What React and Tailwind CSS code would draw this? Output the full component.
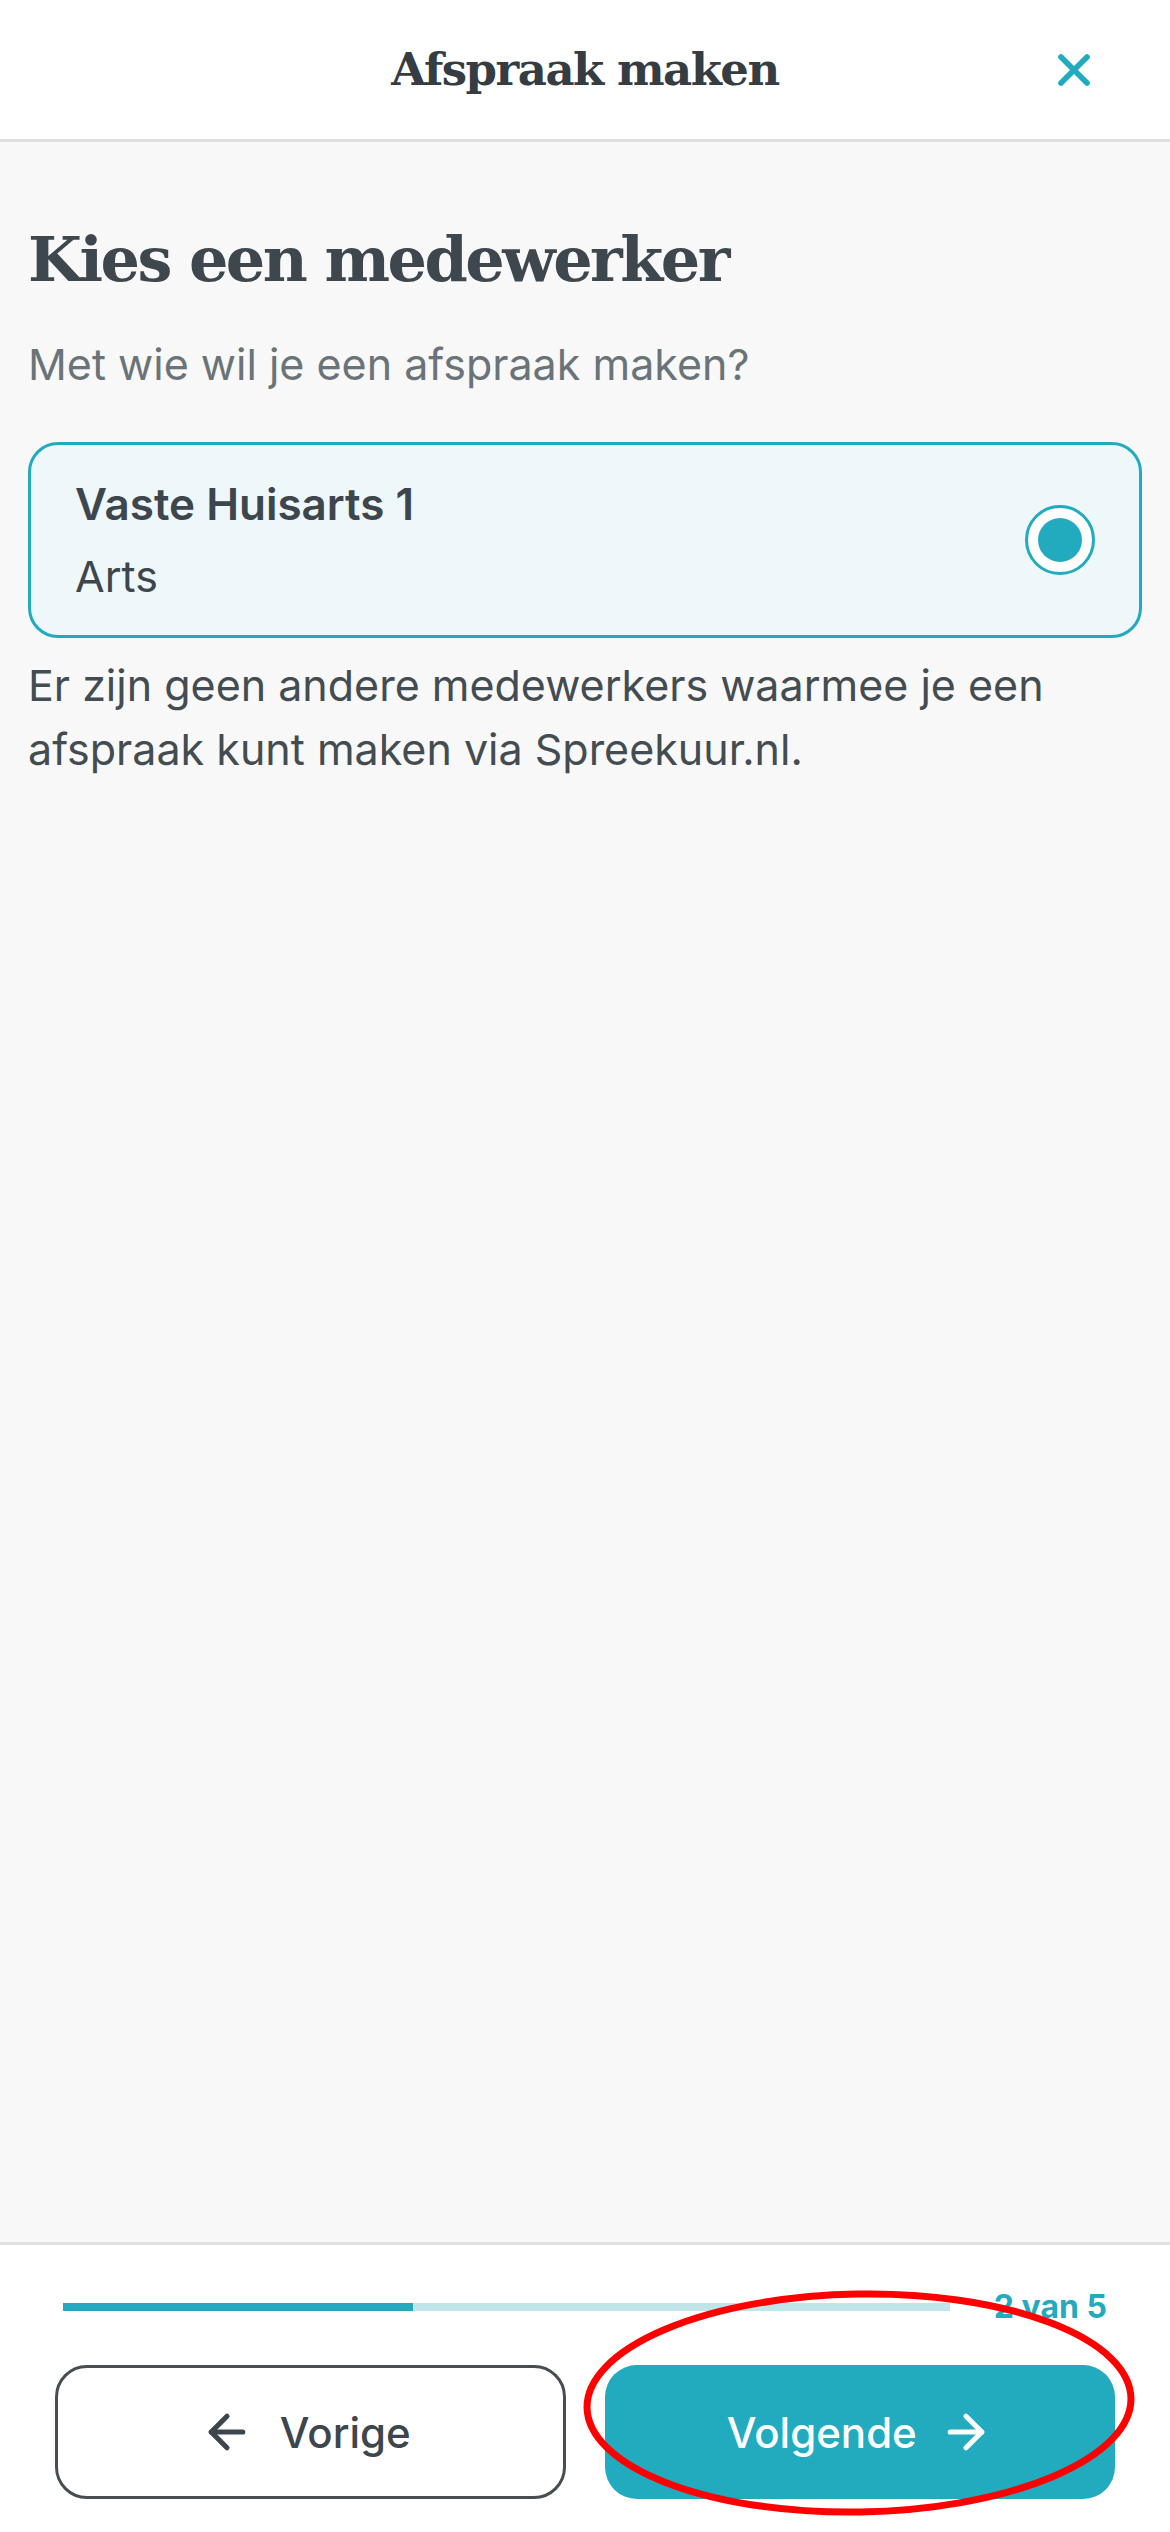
import React from 'react';
import {ArrowLeft, ArrowRight, X} from 'lucide-react';

const serif = {fontFamily: '"DejaVu Serif", "Liberation Serif", serif'};

function Header() {
  return (
    <div className="h-[142px] shrink-0 bg-white border-b-[3px] border-[#dedede] flex items-center justify-center relative">
      <h1 className="text-[45px] font-bold text-[#353d42] tracking-[-1.5px]" style={serif}>Afspraak maken</h1>
      <button className="absolute right-[70px] top-[44px] text-[#22abbf]">
        <X size={52} strokeWidth={2.6}/>
      </button>
    </div>
  );
}

function EmployeeCard() {
  return (
    <div className="mt-[48px] h-[196px] rounded-[30px] border-[3px] border-[#22abbf] bg-[#eef7fa] flex items-center pl-[44px] pr-[44px]">
      <div className="flex-1 flex flex-col">
        <p className="text-[44px] font-semibold text-[#3d464c] leading-[60px]">Vaste Huisarts 1</p>
        <p className="text-[43px] text-[#3d464c] leading-[60px] mt-[12px]">Arts</p>
      </div>
      <div className="w-[70px] h-[70px] rounded-full border-[3px] border-[#22abbf] bg-white flex items-center justify-center">
        <div className="w-[44px] h-[44px] rounded-full bg-[#22abbf]"/>
      </div>
    </div>
  );
}

function Footer() {
  return (
    <div className="h-[290px] shrink-0 bg-white border-t-[3px] border-[#e0e0e0] relative">
      <div className="flex items-center px-[63px] pt-[46px] gap-[44px]">
        <div className="flex-1 h-[8px] bg-[#bfe5eb] flex">
          <div className="w-[39.5%] h-full bg-[#22abbf]"/>
        </div>
        <span className="text-[32px] font-bold text-[#22abbf] leading-none">2 van 5</span>
      </div>
      <div className="grid grid-cols-2 gap-[39px] px-[55px] mt-[42px]">
        <button className="h-[134px] rounded-[32px] border-[3px] border-[#474d52] bg-white flex items-center justify-center text-[#3d464c]">
          <span className="flex items-center gap-[26px] mr-[10px]">
            <ArrowLeft size={54} strokeWidth={2.3}/>
            <span className="text-[42px] font-medium">Vorige</span>
          </span>
        </button>
        <button className="h-[134px] rounded-[32px] bg-[#22abbf] flex items-center justify-center gap-[22px] text-white">
          <span className="text-[42px] font-medium">Volgende</span>
          <ArrowRight size={54} strokeWidth={2.3}/>
        </button>
      </div>
      {/* red annotation ring around the next button */}
      <svg className="absolute left-[580px] top-[44px] pointer-events-none" width="560" height="232" viewBox="0 0 560 232">
        <ellipse cx="279" cy="114" rx="272" ry="109" fill="none" stroke="#ff0000" strokeWidth="7" transform="rotate(-1 279 114)"/>
      </svg>
    </div>
  );
}

export default function App() {
  return (
    <div className="w-[1170px] h-[2532px] flex flex-col bg-[#f8f8f8] overflow-hidden" style={{fontFamily: 'Inter, "Noto Sans", sans-serif'}}>
      <Header/>
      <div className="flex-1 px-[28px] pt-[76px]">
        <h2 className="text-[62px] font-bold text-[#3d474d] leading-[84px] tracking-[-2.5px]" style={serif}>Kies een medewerker</h2>
        <p className="text-[43px] text-[#6a7478] leading-[60px] mt-[32px]">Met wie wil je een afspraak maken?</p>
        <EmployeeCard/>
        <p className="text-[43px] text-[#434c51] leading-[64px] mt-[15px]">
          Er zijn geen andere medewerkers waarmee je een afspraak kunt maken via Spreekuur.nl.
        </p>
      </div>
      <Footer/>
    </div>
  );
}
